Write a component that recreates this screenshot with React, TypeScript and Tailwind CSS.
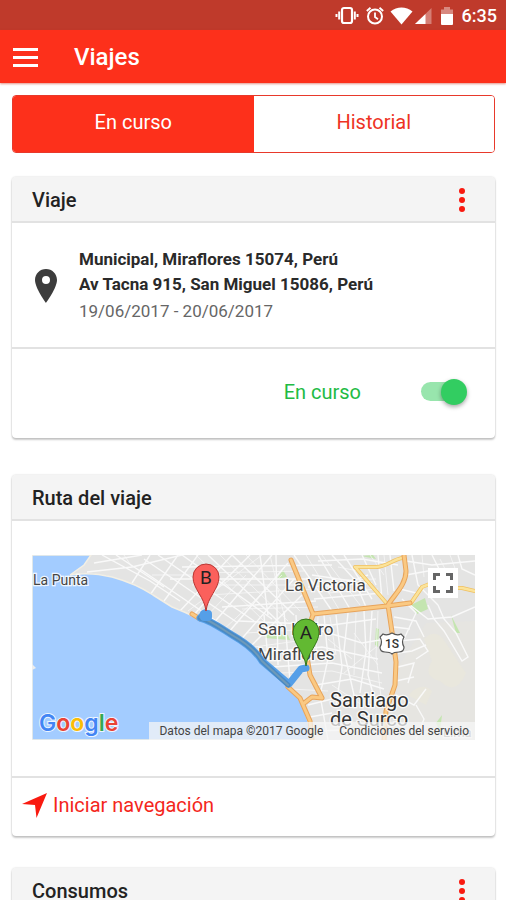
import { useState } from "react";
import type { ReactNode } from "react";

const streets = [
  // centre and coast
  "M62 8 L110 0 M55 17 L100 12 L150 0 M70 0 L118 26 L148 46",
  "M84 0 L132 32 M100 28 L118 0 M118 40 L146 0 M132 46 L166 0",
  "M108 14 L190 70 M112 4 L206 68 M126 0 L222 66 M150 0 L240 64",
  "M148 56 L200 0 M160 62 L188 30 L218 0 M180 70 L240 0",
  "M196 78 L256 8 M206 88 L262 24 M218 92 L270 40",
  "M138 24 L276 24 M150 12 L300 10 M190 52 L284 46",
  "M176 0 L250 70 M200 0 L262 60 M228 0 L236 60 M244 0 L246 110",
  "M206 66 L300 70 L344 64 M226 98 L290 92 L346 104 M240 112 L300 108 L350 118",
  "M290 76 L330 88 L354 84 M284 130 L320 124 L352 134 M276 150 L300 144 M278 162 L300 158 M280 176 L350 174",
  "M232 60 L236 104 M252 56 L258 126 M264 60 L266 100 M292 60 L296 104 L288 140 L296 185",
  "M304 60 L310 112 L304 150 M316 58 L312 96 L322 140 M332 56 L334 96 L328 138 M340 56 L336 120 L344 150",
  "M262 0 L300 56 M286 0 L318 54 M300 0 L322 24 L334 52",
  "M280 20 L320 26 L336 20 M276 32 L340 28 M282 44 L350 38 M312 0 L340 44 M330 0 L344 30",
  "M346 0 L350 44 M358 0 L362 36 M286 6 L330 4 L366 10",
  // east side
  "M374 6 L400 10 L443 6 M380 0 L386 30 L406 50 M400 0 L412 24 M426 0 L430 14 L443 20",
  "M374 20 L396 16 M368 34 L384 38 L396 30 M378 50 L396 64 L420 62 L443 52",
  "M396 50 L402 64 L412 76 L430 106 L436 102 L424 78 L412 64 L406 50",
  "M362 62 L384 66 L392 82 M362 72 L378 74 M366 86 L388 84 L396 96 L384 104",
  "M366 98 L380 96 L394 90 M366 112 L382 108 L376 128 M364 126 L382 122",
  "M364 140 L382 150 L394 134 M384 150 L392 164 L384 185 M370 44 L384 58 L372 84",
];

const thinStreets = [
  "M92 0 L100 12 M120 20 L160 20 M156 56 L230 0 M170 66 L214 20 M190 76 L250 20",
  "M164 0 L232 66 M188 0 L256 66 M214 0 L268 56 M160 30 L270 30 M168 18 L272 16",
  "M210 54 L286 52 M214 78 L280 74 M222 92 L280 84 M248 118 L300 116 L350 128",
  "M258 134 L296 136 M278 168 L300 168 M286 62 L284 100 M176 40 L280 34",
  "M298 62 L304 100 M324 58 L322 120 M346 56 L344 100 L350 150 M300 130 L330 150",
  "M238 0 L252 60 M290 0 L328 50 M306 12 L326 16 M284 26 L344 24 M296 38 L346 34",
  "M352 0 L356 40 M338 0 L352 20 M390 0 L392 22 M408 4 L416 20 M418 0 L424 16",
  "M296 84 L320 104 M312 118 L344 92 M322 78 L346 110 M274 0 L308 56",
];

const parks = [
  "M245 24 L251 15 L255 22 Z",
  "M329 1 L344 4 L341 0 Z",
  "M379 50 L393 43 L396 54 L385 59 Z",
  "M344 73 L347 74 L346 92 L343 90 Z",
  "M419 60 L428 78 L424 78 Z",
  "M404 168 L410 160 L408 176 Z",
  "M233 79 L256 80 L258 85 L233 83 Z",
];

const googleLetters = [
  { char: "G", fill: "fill-[#4285f4]" },
  { char: "o", fill: "fill-[#ea4335]" },
  { char: "o", fill: "fill-[#fbbc05]" },
  { char: "g", fill: "fill-[#4285f4]" },
  { char: "l", fill: "fill-[#34a853]" },
  { char: "e", fill: "fill-[#ea4335]" },
];

function StatusBar() {
  return (
    <div className="flex h-[30px] shrink-0 items-center justify-end bg-[#bf3a2b] pt-px pr-[9px] text-white">
      <svg viewBox="0 0 24 20" className="h-5 w-6" fill="none" stroke="currentColor">
        <rect x="7" y="2" width="10" height="15" rx="2" strokeWidth="2.200" />
        <path d="M4.200 5.500 V13.500 M19.800 5.500 V13.500 M1.500 8 V11 M22.500 8 V11" strokeWidth="2" />
      </svg>
      <svg viewBox="0 0 20 20" className="ml-[6px] size-5" fill="none" stroke="currentColor">
        <circle cx="10" cy="10.500" r="7" strokeWidth="2" />
        <path d="M10 6.500 V11 L13 13.200 M1.800 5 L5.500 1.800 M18.200 5 L14.500 1.800" strokeWidth="1.800" />
      </svg>
      <svg viewBox="0 0 23 18" className="ml-[5px] h-[18px] w-[23px]" fill="currentColor">
        <path d="M0.500 4.500 C7 -0.800 16 -0.800 22.500 4.500 L11.500 17.500 Z" />
      </svg>
      <svg viewBox="0 0 18 18" className="ml-px size-[18px]" fill="currentColor">
        <path d="M17.500 1 V17 H1 Z" opacity="0.35" />
        <path d="M11.500 7 V17 H1 Z" />
      </svg>
      <svg viewBox="0 0 14 20" className="ml-2 h-5 w-[14px]" fill="currentColor">
        <path d="M1 3.500 H4 V1 H10 V3.500 H13 V8 H1 Z" opacity="0.4" />
        <path d="M1 8 H13 V18 Q13 19 12 19 H2 Q1 19 1 18 Z" />
      </svg>
      <span className="ml-2 text-lg leading-5 font-medium">6:35</span>
    </div>
  );
}

function Header() {
  return (
    <header className="z-10 flex h-[53px] shrink-0 items-center bg-[#fd301b] pl-[13px] text-white shadow-[0_1px_2px_rgba(200,40,20,0.5)]">
      <button aria-label="Menú" className="flex w-[25px] flex-col gap-[5px] pt-px">
        <span className="h-[3px] bg-white" />
        <span className="h-[3px] bg-white" />
        <span className="h-[3px] bg-white" />
      </button>
      <h1 className="ml-9 text-2xl leading-8 font-medium">Viajes</h1>
    </header>
  );
}

function Tabs() {
  const [tab, setTab] = useState<"curso" | "historial">("curso");
  const active = "bg-[#fd301b] text-white";
  const inactive = "bg-white text-[#ee3324]";

  return (
    <div className="mt-3 flex h-[58px] overflow-hidden rounded border border-[#e8392b] text-xl">
      <button className={`flex-1 pb-1 ${tab === "curso" ? active : inactive}`} onClick={() => setTab("curso")}>
        En curso
      </button>
      <button className={`flex-1 pb-1 ${tab === "historial" ? active : inactive}`} onClick={() => setTab("historial")}>
        Historial
      </button>
    </div>
  );
}

function Card({ title, menu, children }: { title: string; menu?: boolean; children?: ReactNode }) {
  return (
    <section className="rounded bg-white shadow-[0_2px_2px_rgba(0,0,0,0.2),0_0_2px_rgba(0,0,0,0.2)]">
      <div className="flex h-[46px] items-center justify-between rounded-t border-b-2 border-[#e2e2e2] bg-[#f4f4f4] pt-px pr-[19px] pl-5">
        <h2 className="text-xl leading-6 font-medium text-[#222]">{title}</h2>
        {menu && (
          <button aria-label={`Opciones de ${title}`} className="flex w-7 flex-col items-center gap-[3px]">
            <span className="size-[6px] rounded-full bg-[#f91a10]" />
            <span className="size-[6px] rounded-full bg-[#f91a10]" />
            <span className="size-[6px] rounded-full bg-[#f91a10]" />
          </button>
        )}
      </div>
      {children}
    </section>
  );
}

function TripCard() {
  const [enabled, setEnabled] = useState(true);

  return (
    <Card title="Viaje" menu>
      <div className="flex h-[126px] items-center border-b-2 border-[#e2e2e2] pt-px pl-[23px]">
        <svg viewBox="0 0 22 34" className="h-[34px] w-[22px] shrink-0" fill="#3c3c3c">
          <path
            fillRule="evenodd"
            d="M11 0 C4.900 0 0 4.900 0 11 C0 19 11 34 11 34 C11 34 22 19 22 11 C22 4.900 17.100 0 11 0 Z M11 7 A4 4 0 1 1 11 15 A4 4 0 1 1 11 7 Z"
          />
        </svg>
        <div className="ml-[22px]">
          <p className="text-[17px] leading-[25px] font-bold text-[#2a2a2a]">Municipal, Miraflores 15074, Perú</p>
          <p className="text-[17px] leading-[25px] font-bold text-[#2a2a2a]">Av Tacna 915, San Miguel 15086, Perú</p>
          <p className="text-[17px] leading-7 text-[#666]">19/06/2017 - 20/06/2017</p>
        </div>
      </div>
      <div className="flex h-[89px] items-center justify-end pr-7 pb-1">
        <label htmlFor="trip-status" className="text-xl text-[#22bb44]">
          En curso
        </label>
        <span className="relative ml-[60px] flex h-7 w-[46px] items-center">
          <input
            id="trip-status"
            type="checkbox"
            role="switch"
            checked={enabled}
            onChange={() => setEnabled(!enabled)}
            className="peer h-[19px] w-10 appearance-none rounded-full bg-[#bdbdbd] checked:bg-[#98e5ad]"
          />
          <span className="pointer-events-none absolute left-0 size-[26px] rounded-full bg-white shadow-[0_2px_4px_rgba(0,0,0,0.35)] peer-checked:right-0 peer-checked:left-auto peer-checked:bg-[#32cd61]" />
        </span>
      </div>
    </Card>
  );
}

function Pin({ x, y, letter, fill, stroke }: { x: number; y: number; letter: string; fill: string; stroke: string }) {
  return (
    <g transform={`translate(${x} ${y})`}>
      <path
        d="M0 0 C-1.500 -14 -13 -22 -13 -34 A13 13 0 0 1 13 -34 C13 -22 1.500 -14 0 0 Z"
        fill={fill}
        stroke={stroke}
      />
      <text y="-27" textAnchor="middle" className="fill-[#222] text-[19px]">
        {letter}
      </text>
    </g>
  );
}

function RouteMap() {
  return (
    <div className="relative overflow-hidden">
      <svg viewBox="0 0 443 185" className="block w-full">
        <rect width="443" height="185" fill="#e4e4e3" />
        <path d="M366 112 L394 68 L443 66 V185 H364 Z" fill="#e6e5e1" />
        <path
          d="M392 84 Q404 72 414 88 T434 118 Q424 142 408 126 Q390 122 400 106 Z M376 140 Q390 126 400 136 L394 150 Z"
          fill="#e9e7dd"
        />
        {parks.map((d) => (
          <path key={d} d={d} fill="#c4e5b0" />
        ))}
        <g fill="none" stroke="#f9f9f9">
          {thinStreets.map((d) => (
            <path key={d} d={d} strokeWidth="0.700" />
          ))}
          {streets.map((d) => (
            <path key={d} d={d} strokeWidth="1.400" />
          ))}
        </g>

        {/* sea */}
        <path
          d="M0 0 H59 L52 10 L38 20 C55 17 68 19 80 22 C98 27 112 34 121 40 L140 52 C158 59 180 70 198 80 C210 86 218 94 228 103 L256 132 L268 144 L276 166 L279 185 H0 Z"
          fill="#a3ccff"
          stroke="#f3efe4"
          strokeWidth="1.500"
        />
        <path d="M0 109 L4 113 L0 115 Z" fill="#eee" />

        {/* highways */}
        <g fill="none" strokeLinecap="round" strokeLinejoin="round">
          <g stroke="#f0c060" strokeWidth="4">
            <path d="M323 12 H344 C354 12 360 5 370 3 M324 13 L356 50 M379 48 L390 32 L400 28 L412 33 L430 33 L443 36" />
          </g>
          <g stroke="#fbe39a" strokeWidth="2.500">
            <path d="M323 12 H344 C354 12 360 5 370 3 M324 13 L356 50 M379 48 L390 32 L400 28 L412 33 L430 33 L443 36" />
          </g>
          <g stroke="#e8a45b" strokeWidth="5">
            <path d="M259 5 L270 32 L281 59 L355 51 L378 48 M372 0 L374 16 C374 30 362 40 356 50 L360 77 L364 107 L363 130 L354 156 L352 185" />
            <path d="M281 60 L272 84 L278 120 L290 143 M256 132 L268 143 L278 166 L280 185 M271 149 L280 142 L290 143 M160 59 L168 64" />
          </g>
          <g stroke="#fac983" strokeWidth="3">
            <path d="M259 5 L270 32 L281 59 L355 51 L378 48 M372 0 L374 16 C374 30 362 40 356 50 L360 77 L364 107 L363 130 L354 156 L352 185" />
            <path d="M281 60 L272 84 L278 120 L290 143 M256 132 L268 143 L278 166 L280 185 M271 149 L280 142 L290 143 M160 59 L168 64" />
          </g>
        </g>

        <g className="fill-[#444] stroke-white/80 [paint-order:stroke]" strokeWidth="2.500">
          <text x="1" y="30" className="text-[14px]">La Punta</text>
          <text x="253" y="36" className="text-[17px]">La Victoria</text>
          <text x="226" y="80" className="text-[17px]">San Isidro</text>
          <text x="226" y="105" className="text-[17px]">Miraflores</text>
          <text x="298" y="152" className="fill-[#333] text-[20px]">Santiago</text>
          <text x="298" y="171" className="fill-[#333] text-[20px]">de Surco</text>
          <text x="411" y="182" className="fill-[#888] text-[13px]">Lima</text>
        </g>

        {/* route */}
        <g fill="none" strokeLinejoin="round" strokeLinecap="round">
          <path
            d="M173 58 L168 63 C180 66 190 74 200 80 C214 88 224 96 230 106 L257 129 L269 114 L274 113"
            stroke="#559fe8"
            strokeWidth="7"
          />
          <path d="M168 63 C180 66 190 74 200 80 C214 88 224 96 230 106 L256 130" stroke="#4a8ac4" strokeWidth="5" />
          <path d="M168 62 C180 66 190 74 200 80 C214 88 224 96 230 106 L256 130" stroke="#6f9ab8" strokeWidth="2" />
        </g>
        <rect x="168" y="55" width="12" height="11" rx="4" fill="#559fe8" />

        {/* route 1S shield */}
        <path
          d="M351 79 Q355 81 360 78 Q365 81 369 79 L372 82 Q369 87 372 92 Q372 97 367 97 Q362 97 360 99 Q358 97 353 97 Q348 97 348 92 Q351 87 348 82 Z"
          fill="#fff"
          stroke="#555"
          strokeWidth="1.200"
        />
        <text x="360" y="93" textAnchor="middle" className="fill-[#333] text-[12px] font-medium">1S</text>

        <Pin x={174} y={56} letter="B" fill="#fb605c" stroke="#b93632" />
        <Pin x={274} y={111} letter="A" fill="#62b932" stroke="#35761a" />

        <text
          x="7"
          y="176"
          className="stroke-white/80 font-['Inter',sans-serif] text-[23px] font-semibold [paint-order:stroke]"
          strokeWidth="2"
        >
          {googleLetters.map(({ char, fill }, i) => (
            <tspan key={i} className={fill}>
              {char}
            </tspan>
          ))}
        </text>
      </svg>

      <button
        aria-label="Pantalla completa"
        className="absolute top-[13px] right-[17px] flex size-[30px] items-center justify-center bg-white"
      >
        <svg viewBox="0 0 20 20" className="size-5" fill="none" stroke="#666" strokeWidth="3">
          <path d="M1.500 7 V1.500 H7 M13 1.500 H18.500 V7 M18.500 13 V18.500 H13 M7 18.500 H1.500 V13" />
        </svg>
      </button>

      <div className="absolute right-0 bottom-0 flex h-[18px] items-center gap-4 bg-[#f5f5f5]/75 pr-[6px] pl-[10px] text-xs whitespace-nowrap text-[#444]">
        <span>Datos del mapa ©2017 Google</span>
        <a href="#condiciones">Condiciones del servicio</a>
      </div>
    </div>
  );
}

function RouteCard() {
  return (
    <Card title="Ruta del viaje">
      <div className="border-b-2 border-[#e2e2e2] px-5 pt-[34px] pb-9">
        <RouteMap />
      </div>
      <a href="#navegacion" className="flex h-[58px] items-center pb-1 pl-[10px] text-xl text-[#f4271c]">
        <svg viewBox="0 0 25 25" className="size-[25px]">
          <path d="M25 0 L0 11 L13 12 L14.500 25 Z" fill="#f91a10" />
        </svg>
        <span className="ml-[6px]">Iniciar navegación</span>
      </a>
    </Card>
  );
}

export default function App() {
  return (
    <div className="flex h-dvh flex-col overflow-hidden bg-white font-['Roboto',sans-serif]">
      <StatusBar />
      <Header />
      <main className="flex-1 overflow-y-auto pr-[11px] pl-3 [scrollbar-width:none]">
        <Tabs />
        <div className="mt-6 flex flex-col gap-[37px]">
          <TripCard />
          <RouteCard />
        </div>
        <div className="mt-8">
          <Card title="Consumos" menu />
        </div>
      </main>
    </div>
  );
}
